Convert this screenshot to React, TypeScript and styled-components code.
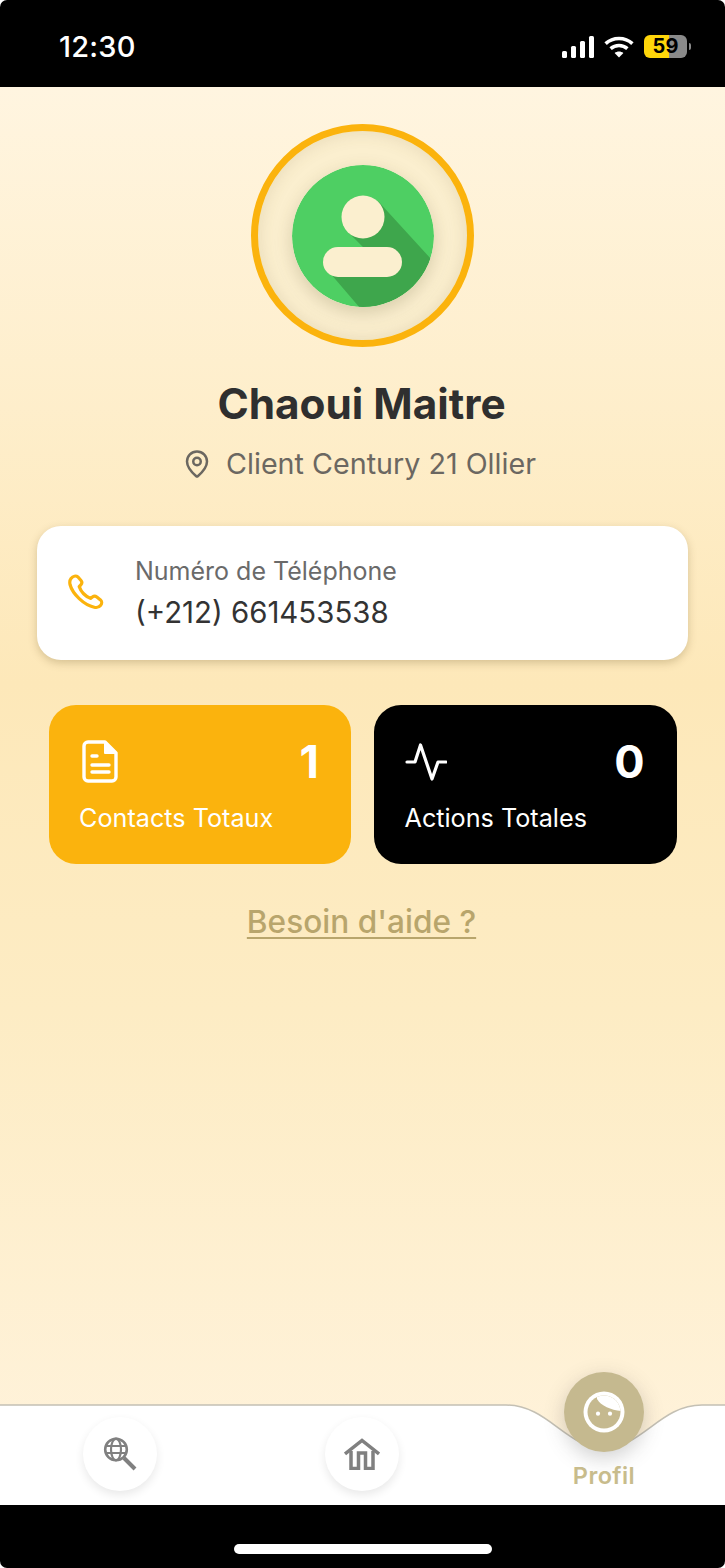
// App.tsx
import React from "react";
import styled, { createGlobalStyle } from "styled-components";
import { MapPin } from "lucide-react";

const GlobalStyle = createGlobalStyle`
  html, body {
    margin: 0;
    padding: 0;
    background: #fff;
  }
  * {
    box-sizing: border-box;
  }
`;

const Frame = styled.div`
  width: 725px;
  height: 1568px;
  display: flex;
  flex-direction: column;
  overflow: hidden;
  border-radius: 7px;
  background: #000;
  font-family: Inter, "Liberation Sans", sans-serif;
`;

const StatusBar = styled.div`
  height: 87px;
  flex: none;
  display: flex;
  align-items: center;
  justify-content: space-between;
  padding: 6px 38px 0 59px;
  color: #fff;
`;

const Time = styled.span`
  font-size: 29px;
  font-weight: 500;
  letter-spacing: 0.2px;
`;

const StatusIcons = styled.div`
  display: flex;
  align-items: center;
  gap: 10px;
`;

const Battery = styled.div`
  position: relative;
  width: 43px;
  height: 23px;
  border-radius: 6px;
  background: linear-gradient(90deg, #ffd60a 0 58%, #8a8a8a 58% 100%);
  color: #000;
  font-size: 20px;
  font-weight: 700;
  line-height: 23px;
  text-align: center;

  &::after {
    content: "";
    position: absolute;
    right: -4px;
    top: 8px;
    width: 2px;
    height: 7px;
    border-radius: 0 2px 2px 0;
    background: #8a8a8a;
  }
`;

const Screen = styled.div`
  flex: 1;
  display: flex;
  flex-direction: column;
  align-items: center;
  background: linear-gradient(180deg, #fff5e0 0%, #fde8b9 42%, #fdecc4 65%, #fff3dd 100%);
`;

const Content = styled.div`
  flex: 1;
  width: 100%;
  display: flex;
  flex-direction: column;
  align-items: center;
  padding-top: 37px;
`;

const AvatarRing = styled.div`
  width: 223px;
  height: 223px;
  border-radius: 50%;
  border: 7px solid #fbb30d;
  background: #fbefcf;
  box-shadow: inset 0 0 18px rgba(120, 100, 50, 0.16);
  display: flex;
  align-items: center;
  justify-content: center;
`;

const AvatarArt = styled.svg`
  width: 142px;
  height: 142px;
  border-radius: 50%;
  box-shadow: 0 6px 18px rgba(90, 80, 40, 0.22);
`;

const Name = styled.h1`
  margin: 31px 2px 0 0;
  font-size: 42.3px;
  line-height: 52px;
  font-weight: 700;
  color: #2f2f2f;
`;

const Location = styled.div`
  margin: 15px 7px 0 0;
  display: flex;
  align-items: center;
  gap: 14px;
  color: #6b6761;
  font-size: 28.7px;
  line-height: 38px;
`;

const PhoneCard = styled.div`
  margin-top: 43px;
  width: 651px;
  height: 134px;
  flex: none;
  display: flex;
  align-items: center;
  gap: 29px;
  padding: 0 0 0 31px;
  border-radius: 24px;
  background: #fff;
  box-shadow: 0 3px 9px rgba(110, 90, 40, 0.28);
`;

const PhoneText = styled.div`
  display: flex;
  flex-direction: column;
  gap: 7px;
`;

const PhoneLabel = styled.span`
  font-size: 25px;
  line-height: 32px;
  color: #6a6a6a;
`;

const PhoneValue = styled.span`
  font-size: 29.4px;
  line-height: 38px;
  color: #333;
`;

const StatsRow = styled.div`
  margin-top: 45px;
  display: flex;
  gap: 23px;
`;

const StatCard = styled.div<{ $bg: string }>`
  width: 302.5px;
  height: 159px;
  padding: 34px 32px 0 30.5px;
  border-radius: 27px;
  background: ${(p) => p.$bg};
  color: #fff;
  display: flex;
  flex-direction: column;
`;

const StatTop = styled.div`
  display: flex;
  align-items: center;
  justify-content: space-between;
  height: 46px;
`;

const StatCount = styled.span`
  font-size: 45px;
  line-height: 46px;
  font-weight: 700;
`;

const StatLabel = styled.span`
  margin-top: 17px;
  font-size: 25.2px;
  line-height: 32px;
`;

const HelpLink = styled.a`
  margin: 38px 2px 0 0;
  font-size: 31.6px;
  line-height: 40px;
  font-weight: 500;
  color: #b8a56c;
  text-decoration: underline;
  text-decoration-thickness: 2px;
  text-underline-offset: 4px;
`;

const TabBar = styled.div`
  position: relative;
  width: 100%;
  height: 101px;
  flex: none;
  display: flex;
  align-items: flex-start;
  padding: 13px 0 0 83px;
  gap: 168px;
`;

const TabShape = styled.svg`
  position: absolute;
  left: 0;
  top: 0;
`;

const TabButton = styled.button`
  position: relative;
  width: 74px;
  height: 74px;
  padding: 0;
  border: none;
  border-radius: 50%;
  background: #fff;
  box-shadow: 0 4px 10px rgba(0, 0, 0, 0.09);
  display: flex;
  align-items: center;
  justify-content: center;
`;

const ActiveTab = styled.div`
  position: absolute;
  left: 564px;
  top: -32px;
  width: 80px;
  display: flex;
  flex-direction: column;
  align-items: center;
`;

const ActiveBubble = styled.div`
  width: 80px;
  height: 80px;
  border-radius: 50%;
  background: #c5b98f;
  box-shadow: 0 6px 20px rgba(70, 70, 70, 0.25);
  display: flex;
  align-items: center;
  justify-content: center;
`;

const ActiveLabel = styled.span`
  margin-top: 10px;
  font-size: 23.5px;
  line-height: 28px;
  font-weight: 600;
  letter-spacing: 0.4px;
  color: #c8bc8c;
`;

const BottomBar = styled.div`
  height: 63px;
  flex: none;
  display: flex;
  justify-content: center;
  padding-top: 39px;
`;

const HomeIndicator = styled.div`
  width: 258px;
  height: 10px;
  border-radius: 5px;
  background: #fff;
`;

const DocSvg = styled.svg`
  margin: -2px 0 0 3px;
`;

function SignalIcon() {
  return (
    <svg width="32" height="22" viewBox="0 0 32 22" fill="#fff">
      <rect x="0" y="15" width="5" height="7" rx="1.5" />
      <rect x="9" y="10" width="5" height="12" rx="1.5" />
      <rect x="18" y="5" width="5" height="17" rx="1.5" />
      <rect x="27" y="0" width="5" height="22" rx="1.5" />
    </svg>
  );
}

function WifiIcon() {
  return (
    <svg width="30" height="22" viewBox="0 0 30 22" fill="none" stroke="#fff" strokeWidth="3.6">
      <path d="M1.6 7.6C9 .8 21 .8 28.4 7.6" />
      <path d="M6.6 12.6c4.8-4.2 12-4.2 16.8 0" />
      <path d="M15 21.6l-4.4-4.6c2.6-2 6.2-2 8.8 0z" fill="#fff" stroke="none" />
    </svg>
  );
}

function AvatarIcon() {
  return (
    <AvatarArt viewBox="0 0 142 142">
      <defs>
        <clipPath id="avatar-clip">
          <circle cx="71" cy="71" r="71" />
        </clipPath>
      </defs>
      <circle cx="71" cy="71" r="71" fill="#4ecf63" />
      <path
        d="M86 36L150 106V150H74L38 108L70 90L71 82L56 67Z"
        fill="#3ea64c"
        clipPath="url(#avatar-clip)"
      />
      <circle cx="71" cy="52" r="21.5" fill="#fbefcf" />
      <rect x="31" y="82" width="79" height="30" rx="15" fill="#fbefcf" />
    </AvatarArt>
  );
}

function PhoneIcon() {
  return (
    <svg width="38" height="38" viewBox="0 0 38 38" fill="none" stroke="#fbb30d" strokeWidth="3.2" strokeLinejoin="round">
      <path d="M3 4.5C5 2 8 1.5 10 3l3 3.5c1.2 1.4 1 3-.2 4.3l-1.6 1.8c1.8 5 6 9.5 11.3 11.8l1.9-1.5c1.3-1 3-1.1 4.4 0l3.7 3c1.6 1.4 1.5 3.8.2 5.3-1.6 2-4 2.7-6.5 2C16 31 4.5 20 2 10.5 1.5 8 1.8 6 3 4.5z" />
    </svg>
  );
}

function DocIcon() {
  return (
    <DocSvg width="36" height="43" viewBox="0 0 36 43" fill="none" stroke="#fff" strokeWidth="3.4" strokeLinecap="round" strokeLinejoin="round">
      <path d="M6 2H23L34 13V37a4 4 0 0 1-4 4H6a4 4 0 0 1-4-4V6a4 4 0 0 1 4-4Z" />
      <path d="M23 2V13H34Z" fill="#fff" strokeWidth="2" />
      <path d="M10 16h5M10 25h17M10 32h17" />
    </DocSvg>
  );
}

function PulseIcon() {
  return (
    <svg width="42" height="38" viewBox="0 0 42 38" fill="none" stroke="#fff" strokeWidth="3.2" strokeLinecap="round" strokeLinejoin="round">
      <path d="M2 19H10L15.5 2L27 36L33 19H41" />
    </svg>
  );
}

function GlobeSearchIcon() {
  return (
    <svg width="34" height="34" viewBox="0 0 34 34" fill="none" stroke="#808080" strokeWidth="2.2">
      <circle cx="13" cy="12.5" r="10.8" strokeWidth="2.6" />
      <ellipse cx="13" cy="12.5" rx="5" ry="10.8" />
      <path d="M3 9h20M3 16h20" />
      <path d="M21 21l11 11" strokeWidth="4" />
    </svg>
  );
}

function HomeIcon() {
  return (
    <svg width="36" height="32" viewBox="0 0 36 32" fill="none" stroke="#808080" strokeWidth="3.5">
      <path d="M1 16L18 2.5L35 16" />
      <path d="M7 13V30.5H14.5V15H21.5V30.5H29V13" />
    </svg>
  );
}

function FaceIcon() {
  return (
    <svg width="42" height="42" viewBox="0 0 42 42">
      <defs>
        <clipPath id="face-clip">
          <circle cx="21" cy="21" r="16.5" />
        </clipPath>
      </defs>
      <circle cx="21" cy="21" r="20.5" fill="#fff" />
      <circle cx="21" cy="21" r="16.5" fill="#c5b98f" />
      <path d="M14 8C18 15 28 19 38 20V2H14Z" fill="#fff" clipPath="url(#face-clip)" />
      <circle cx="15" cy="22.7" r="2.1" fill="#fff" />
      <circle cx="27" cy="22.7" r="2.1" fill="#fff" />
    </svg>
  );
}

function App() {
  return (
    <>
      <GlobalStyle />
      <Frame>
        <StatusBar>
          <Time>12:30</Time>
          <StatusIcons>
            <SignalIcon />
            <WifiIcon />
            <Battery>59</Battery>
          </StatusIcons>
        </StatusBar>

        <Screen>
          <Content>
            <AvatarRing>
              <AvatarIcon />
            </AvatarRing>
            <Name>Chaoui Maitre</Name>
            <Location>
              <MapPin size={30} strokeWidth={2} />
              Client Century 21 Ollier
            </Location>

            <PhoneCard>
              <PhoneIcon />
              <PhoneText>
                <PhoneLabel>Numéro de Téléphone</PhoneLabel>
                <PhoneValue>(+212) 661453538</PhoneValue>
              </PhoneText>
            </PhoneCard>

            <StatsRow>
              <StatCard $bg="#fbb30d">
                <StatTop>
                  <DocIcon />
                  <StatCount>1</StatCount>
                </StatTop>
                <StatLabel>Contacts Totaux</StatLabel>
              </StatCard>
              <StatCard $bg="#000">
                <StatTop>
                  <PulseIcon />
                  <StatCount>0</StatCount>
                </StatTop>
                <StatLabel>Actions Totales</StatLabel>
              </StatCard>
            </StatsRow>

            <HelpLink href="#">Besoin d'aide ?</HelpLink>
          </Content>

          <TabBar>
            <TabShape width="725" height="101" viewBox="0 0 725 101">
              <path
                d="M0 1H506C548 1 566 44 604 44C642 44 660 1 702 1H725V101H0Z"
                fill="#fff"
              />
              <path
                d="M0 1H506C548 1 566 44 604 44C642 44 660 1 702 1H725"
                fill="none"
                stroke="#c4c0b4"
                strokeWidth="1.5"
              />
            </TabShape>
            <TabButton>
              <GlobeSearchIcon />
            </TabButton>
            <TabButton>
              <HomeIcon />
            </TabButton>
            <ActiveTab>
              <ActiveBubble>
                <FaceIcon />
              </ActiveBubble>
              <ActiveLabel>Profil</ActiveLabel>
            </ActiveTab>
          </TabBar>
        </Screen>

        <BottomBar>
          <HomeIndicator />
        </BottomBar>
      </Frame>
    </>
  );
}

export default App;
